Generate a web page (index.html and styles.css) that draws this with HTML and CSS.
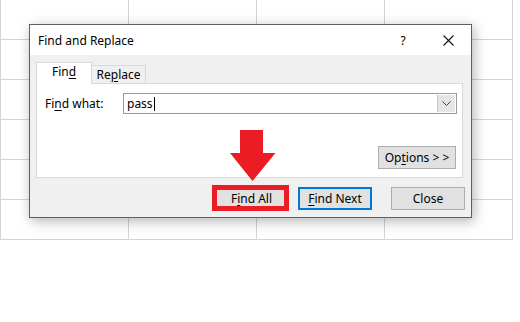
FILE: index.html
```html
<!DOCTYPE html>
<html>
<head>
<meta charset="utf-8">
<title>Find and Replace</title>
<link rel="stylesheet" href="styles.css">
</head>
<body>
<div class="sheet"></div>

<div class="dialog">
	<div class="titlebar">
		<span class="title">Find and Replace</span>
		<span class="help">?</span>
		<span class="close"><svg width="11" height="11" viewBox="0 0 11 11"><path d="M0.5 0.5 L10.5 10.5 M10.5 0.5 L0.5 10.5" stroke="#111" stroke-width="1.1" fill="none"/></svg></span>
	</div>
	<div class="body">
		<div class="tabs">
			<div class="tab active">Fin<u>d</u></div>
			<div class="tab">Re<u>p</u>lace</div>
		</div>
		<div class="panel">
			<div class="row">
				<label class="label">Fi<u>n</u>d what:</label>
				<div class="combo">
					<span class="value">pass</span><span class="caret"></span>
					<span class="drop"><svg width="9" height="5" viewBox="0 0 9 5"><path d="M0.5 0.5 L4.5 4.5 L8.5 0.5" stroke="#444" stroke-width="1" fill="none"/></svg></span>
				</div>
			</div>
			<div class="opts"><button class="btn options">Op<u>t</u>ions &gt; &gt;</button></div>
		</div>
		<div class="actions">
			<button class="btn findall">F<u>i</u>nd All</button>
			<button class="btn findnext"><u>F</u>ind Next</button>
			<button class="btn close-btn">Close</button>
		</div>
	</div>
</div>

<div class="mark"></div>
<svg class="arrow" width="46" height="52" viewBox="0 0 46 52"><polygon points="10,0 33,0 33,23 45.5,23 22.5,51 0,23 10,23" fill="#ec1c24"/></svg>
</body>
</html>
```

FILE: styles.css
```css
body { margin:0; background:#fff; font-family:"Noto Sans", "Liberation Sans", sans-serif; font-size:12px; color:#000;}
u { text-decoration:underline; text-underline-offset:2px;}

.sheet { width:513px; height:240px;
	background-image:linear-gradient(to right, #d4d4d4 1px, transparent 1px), linear-gradient(to bottom, transparent 39px, #d4d4d4 39px);
	background-size:128px 40px;}

.dialog { position:absolute; left:29px; top:24px; width:441px; height:192px; border:1px solid #5f5f5f; background:#f0f0f0; box-shadow:2px 3px 12px rgba(0,0,0,0.3);}
.titlebar { height:30px; background:#fff; display:flex; align-items:center; padding-left:8px;}
.title { flex:1; font-size:12px;}
.help { width:10px; margin-right:35px; text-align:center;}
.close { width:11px; height:11px; margin-right:17px; display:flex;}

.body { height:162px; padding-top:7px; box-sizing:border-box;}
.tabs { display:flex; align-items:flex-end; padding-left:6px; height:21px; position:relative; z-index:1;}
.tab { height:18px; width:54px; box-sizing:border-box; border:1px solid #d9d9d9; border-bottom:none; border-left:none; display:flex; align-items:center; justify-content:center; line-height:1;}
.tab.active { height:22px; width:56px; border-left:1px solid #d9d9d9; background:#fff; margin-bottom:-1px; padding-bottom:3px;}

.panel { margin-left:6px; width:427px; height:95px; box-sizing:border-box; border:1px solid #d9d9d9; background:#fff; padding:9px 5px 7px 8px;}
.row { display:flex; align-items:center;}
.label { width:78px;}
.combo { width:334px; height:21px; box-sizing:border-box; border:1px solid #9a9a9a; display:flex; align-items:center; padding-left:3px;}
.value { line-height:1;}
.caret { width:1px; height:14px; background:#000; margin-left:1px;}
.drop { margin-left:auto; width:17px; height:17px; margin-right:1px; background:#e5e5e5; border-left:1px solid #c4c4c4; display:flex; align-items:center; justify-content:center;}

.opts { display:flex; justify-content:flex-end; margin-top:32px; padding-right:1px;}
.btn { font-family:inherit; font-size:12px; color:#000; height:23px; box-sizing:border-box; border:1px solid #adadad; background:#e1e1e1; padding:0; line-height:1;}
.options { width:78px;}

.actions { display:flex; justify-content:flex-end; padding-right:6px; margin-top:9px;}
.findall { width:75px;}
.findnext { width:74px; margin-left:9px; border:2px solid #0078d7;}
.close-btn { width:74px; margin-left:19px;}

.mark { position:absolute; left:212px; top:185px; width:77px; height:26px; box-sizing:border-box; border:5px solid #ec1c24;}
.arrow { position:absolute; left:230px; top:130px;}
```
